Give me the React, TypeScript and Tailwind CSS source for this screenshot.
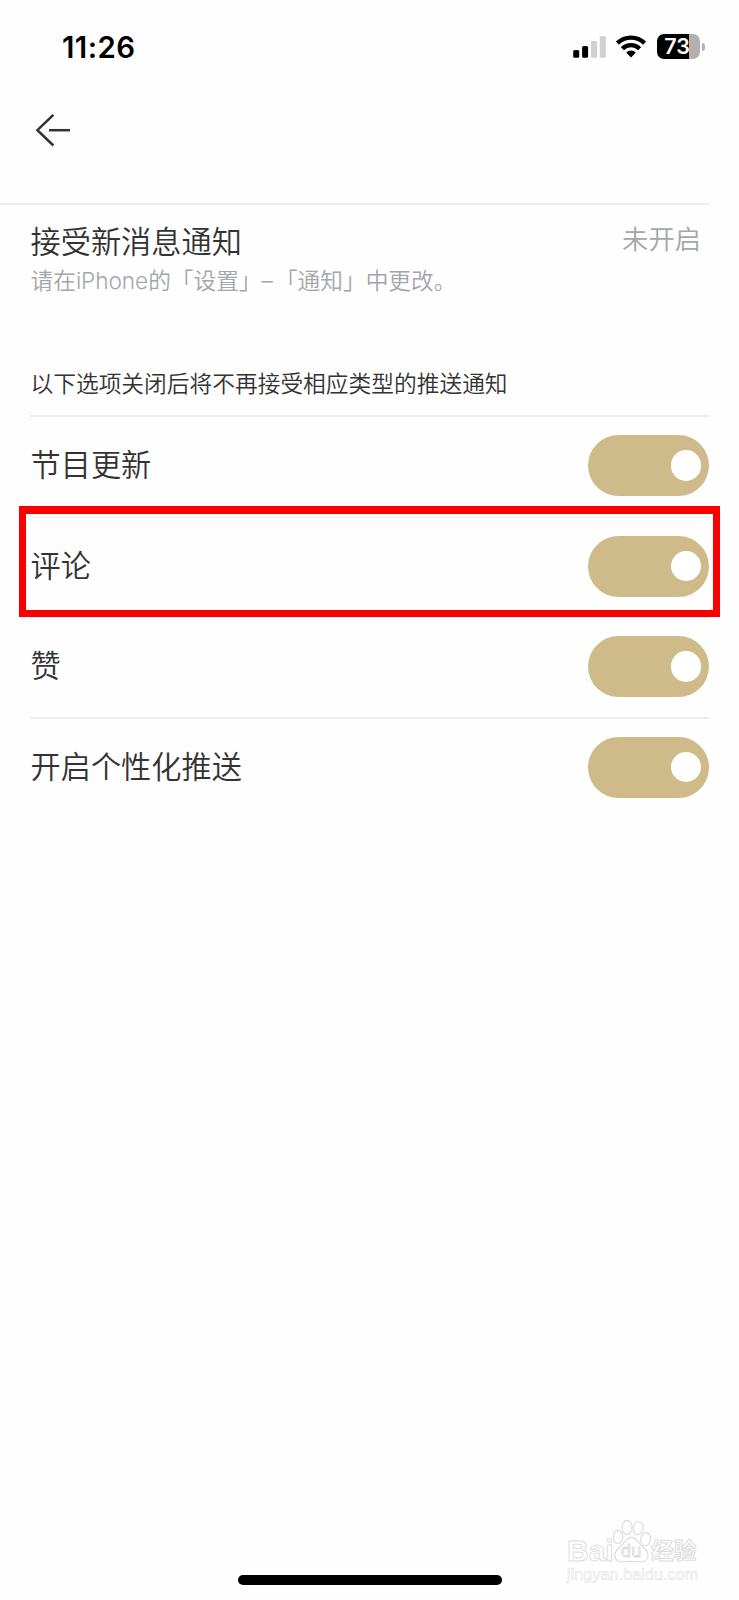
import clsx from "clsx";

const options = ["节目更新", "评论", "赞", "开启个性化推送"];

const StatusBar = () => {
  return (
    <div className="flex h-[94px] items-start justify-between pl-[62px] pr-[34.5px] pt-[29px]">
      <span className="pt-[1px] font-[Inter,sans-serif] text-[29.4px] leading-[36px] font-semibold tracking-[0.4px] text-black">
        11:26
      </span>

      <div className="flex items-start pt-[5px]">
        <svg width="33" height="25" viewBox="0 0 33 25">
          <rect x="0.2" y="16" width="6" height="7.8" rx="1.6" fill="#000" />
          <rect x="9.1" y="12" width="6" height="11.8" rx="1.6" fill="#000" />
          <rect x="18" y="7" width="6" height="16.8" rx="1.6" fill="#d0d0d0" />
          <rect x="26.8" y="2" width="6" height="21.8" rx="1.6" fill="#d0d0d0" />
        </svg>

        <svg
          width="32"
          height="25"
          viewBox="0 0 32 25"
          className="ml-[9px]"
          fill="none"
          stroke="#000"
          strokeWidth="4.4"
        >
          <path d="M2.4 9.2 A19.5 19.5 0 0 1 29.6 9.2" />
          <path d="M7.4 14.7 A12.2 12.2 0 0 1 24.6 14.7" />
          <path
            d="M16 16.6 C13.9 16.6 12.3 17.4 11.3 18.7 L16 23.6 L20.7 18.7 C19.7 17.4 18.1 16.6 16 16.6 Z"
            fill="#000"
            stroke="none"
          />
        </svg>

        <div className="ml-[10px] flex items-center gap-[2px]">
          <div className="flex h-[25px] w-[43px] items-center justify-center rounded-[7px] bg-linear-to-r from-black from-[74%] to-[#b1b1b1] to-[74%] pr-[2px]">
            <span className="font-[Inter,sans-serif] text-[21.5px] leading-none font-semibold text-white">
              73
            </span>
          </div>
          <div className="h-[8px] w-[3px] rounded-r-full bg-[#b1b1b1]" />
        </div>
      </div>
    </div>
  );
};

const Toggle = () => {
  return (
    <button
      type="button"
      className="flex h-[61px] w-[121.5px] items-center justify-end rounded-full bg-[#cfbb89] pr-[8px]"
    >
      <span className="size-[30.5px] rounded-full bg-white" />
    </button>
  );
};

const Watermark = () => {
  return (
    <div className="absolute top-[1519px] left-[567px] w-[134px] font-['Liberation_Sans','Noto_Sans_CJK_SC',sans-serif] text-white">
      <div className="flex h-[46px] items-end">
        <span className="w-[46px] text-[30px] leading-[28px] font-bold [-webkit-text-stroke:1px_#dedede]">
          Bai
        </span>
        <div className="relative h-[46px] w-[38px]">
          <svg
            width="38"
            height="46"
            viewBox="0 0 38 46"
            fill="#fff"
            stroke="#dadada"
            strokeWidth="1.1"
          >
            <ellipse cx="5" cy="18" rx="4.8" ry="6.6" />
            <ellipse cx="14" cy="8.4" rx="5" ry="7" />
            <ellipse cx="25.2" cy="9" rx="5" ry="6.6" transform="rotate(10 25.2 9)" />
            <ellipse cx="32.6" cy="20.2" rx="4.8" ry="6.6" transform="rotate(8 32.6 20.2)" />
            <path d="M18.5 18.4 C13 18.4 12 24 7.5 27.5 C3.5 30.6 1.3 33.5 1.9 37.3 C2.6 41.5 6.2 43 10 42.7 C14.5 42.3 22.5 42.3 26.5 42.7 C30.8 43.1 34.3 41 34.9 37 C35.5 33.2 33 30.5 29.5 27.5 C25 23.7 24 18.4 18.5 18.4 Z" />
          </svg>
          <span className="absolute top-[23px] left-[8px] text-[18px] leading-[18px] tracking-[0.3px] [-webkit-text-stroke:0.9px_#dadada]">
            du
          </span>
        </div>
        <span className="pb-[1px] text-[22.8px] leading-[25px] font-bold [-webkit-text-stroke:1px_#dedede]">
          经验
        </span>
      </div>
      <p className="-mt-[1px] text-[16.2px] leading-[20px] tracking-[0.05px] whitespace-nowrap [-webkit-text-stroke:0.6px_#e6e6e6]">
        jingyan.baidu.com
      </p>
    </div>
  );
};

export default function App() {
  return (
    <main className="relative h-[1600px] w-[739px] overflow-hidden bg-[#fefefe] font-['Liberation_Sans','Noto_Sans_CJK_SC',sans-serif] text-[#333]">
      <StatusBar />

      <header className="mr-[30px] h-[111px] border-b-2 border-[#ececec] pt-[20px] pl-[35px]">
        <svg
          width="36"
          height="33"
          viewBox="0 0 36 33"
          fill="none"
          stroke="#333"
          strokeWidth="2.5"
        >
          <path d="M18.4 0.8 L2.4 16.2 L18.4 31.5" />
          <path d="M14 16.2 H35" />
        </svg>
      </header>

      <section className="flex h-[140px] justify-between pt-[18px] pr-[38px] pl-[30.5px]">
        <div>
          <h1 className="text-[30.2px] leading-[40px] font-[350]">接受新消息通知</h1>
          <p className="-mt-[2px] font-[Inter,'Noto_Sans_CJK_SC',sans-serif] text-[22.7px] leading-[40px] font-[350] text-[#a3a6ab]">
            请在<span className="font-light tracking-[-0.1px]">iPhone</span>的「设置」
            <span className="mr-[2px]">–</span>「通知」中更改。
          </p>
        </div>
        <span className="text-[26.3px] leading-[35px] font-[350] text-[#a3a6ab]">
          未开启
        </span>
      </section>

      <section className="mr-[30px] ml-[30px]">
        <h2 className="h-[72px] border-b-2 border-[#ececec] pt-[19px] pl-[0.5px] text-[22.72px] leading-[40px] font-[350]">
          以下选项关闭后将不再接受相应类型的推送通知
        </h2>
        <ul>
          {options.map((option, i) => (
            <li
              key={option}
              className={clsx(
                "flex h-[100.5px] items-start justify-between pt-[18px]",
                i === 0 && "border-b border-[#efefef]",
                i > 0 && i < options.length - 1 && "border-b-2 border-[#ececec]"
              )}
            >
              <span className="pl-[0.5px] text-[30.2px] leading-[61px] font-[350]">
                {option}
              </span>
              <Toggle />
            </li>
          ))}
        </ul>
      </section>

      <div className="absolute top-[506px] left-[19px] h-[111px] w-[701px] border-[7px] border-t-[8px] border-[#fb0000]" />

      <Watermark />
      <div className="absolute top-[1575px] left-[238px] h-[10px] w-[264px] rounded-full bg-black" />
    </main>
  );
}
